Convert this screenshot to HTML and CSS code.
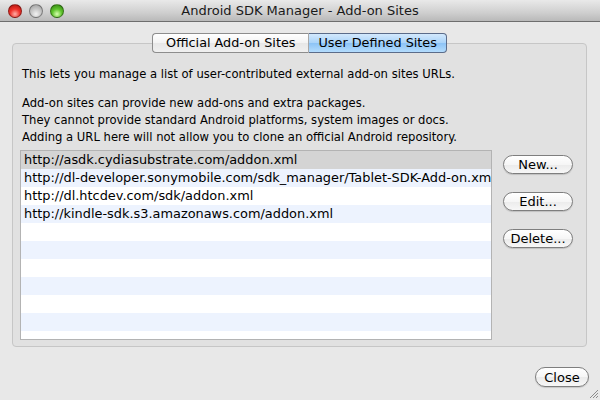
FILE: index.html
```html
<!DOCTYPE html>
<html lang="en">

<head>
    <meta charset="UTF-8">
    <title>Android SDK Manager - Add-on Sites</title>
    <link rel="stylesheet" href="styles.css">
</head>

<body>
    <div class="window">
        <div class="titlebar">
            <div class="lights">
                <span class="light red"></span>
                <span class="light gray"></span>
                <span class="light green"></span>
            </div>
            <div class="title">Android SDK Manager - Add-on Sites</div>
        </div>

        <div class="content">
            <div class="tabs">
                <span class="tab">Official Add-on Sites</span>
                <span class="tab active">User Defined Sites</span>
            </div>
            <div class="panel">
                <p class="info">This lets you manage a list of user-contributed external add-on sites URLs.</p>
                <p class="info">Add-on sites can provide new add-ons and extra packages.<br>
                    They cannot provide standard Android platforms, system images or docs.<br>
                    Adding a URL here will not allow you to clone an official Android repository.</p>

                <div class="sites">
                    <div class="list">
                        <div class="row selected">http://asdk.cydiasubstrate.com/addon.xml</div>
                        <div class="row">http://dl-developer.sonymobile.com/sdk_manager/Tablet-SDK-Add-on.xml</div>
                        <div class="row">http://dl.htcdev.com/sdk/addon.xml</div>
                        <div class="row">http://kindle-sdk.s3.amazonaws.com/addon.xml</div>
                    </div>
                    <div class="buttons">
                        <button class="btn">New...</button>
                        <button class="btn">Edit...</button>
                        <button class="btn">Delete...</button>
                    </div>
                </div>
            </div>
            <div class="footer">
                <button class="btn close">Close</button>
            </div>
        </div>

        <svg class="grip" width="10" height="10" viewBox="0 0 10 10">
            <path d="M9 1 L1 9 M9 4 L4 9 M9 7 L7 9" stroke="#8c8c8c" stroke-width="1" />
        </svg>
    </div>
</body>

</html>
```

FILE: styles.css
```css
* {
    margin: 0;
    padding: 0;
    box-sizing: border-box;
}

body {
    width: 600px;
    height: 400px;
    overflow: hidden;
    background-color: #e8e8e8;
    font-family: "DejaVu Sans", "Noto Sans", sans-serif;
    color: #000;
}

.window {
    position: relative;
    height: 400px;
}

.titlebar {
    position: relative;
    height: 22px;
    background: linear-gradient(#e9e9e9, #cfcfcf 60%, #b9b9b9);
    border-bottom: 1px solid #6e6e6e;
    display: flex;
    align-items: center;
    justify-content: center;
}

.lights {
    position: absolute;
    left: 8px;
    top: 4px;
    display: flex;
    gap: 7px;
}

.light {
    width: 14px;
    height: 14px;
    border-radius: 50%;
    border: 1px solid rgba(0, 0, 0, 0.35);
}

.light.red {
    background: radial-gradient(circle at 50% 75%, #ffb0a8 0, #f0332b 45%, #a8100a 100%);
}

.light.gray {
    background: radial-gradient(circle at 50% 75%, #f2f2f2 0, #c4c4c4 50%, #9a9a9a 100%);
}

.light.green {
    background: radial-gradient(circle at 50% 75%, #d8ffb0 0, #5fc42d 45%, #2d7d0c 100%);
}

.title {
    font-size: 13px;
    color: #1a1a1a;
}

.content {
    padding: 11px 13px 0 12px;
}

.tabs {
    position: relative;
    z-index: 1;
    display: flex;
    justify-content: center;
    margin-bottom: -10px;
}

.tab {
    height: 20px;
    line-height: 18px;
    font-size: 12.8px;
    padding: 0 13px;
    border: 1px solid #8d8d8d;
    background: linear-gradient(#ffffff, #f3f3f3 50%, #e7e7e7 51%, #f0f0f0);
}

.tab:first-child {
    border-radius: 4px 0 0 4px;
    border-right-color: #a8a8a8;
}

.tab.active {
    padding: 0 9px;
    border-radius: 0 4px 4px 0;
    border-color: #5b6c8a;
    border-left: none;
    background: linear-gradient(#d3e9fd, #a9d3f9 50%, #8cc3f6 51%, #b3dcfd);
}

.panel {
    height: 304px;
    background-color: #e1e1e1;
    border: 1px solid #c6c6c6;
    border-radius: 4px;
    padding: 22px 6px 6px 7px;
}

.info {
    font-size: 11.6px;
    line-height: 17px;
    padding-left: 2px;
    margin-bottom: 12px;
}

.info + .info {
    margin-bottom: 4px;
}

.sites {
    display: flex;
}

.list {
    width: 472px;
    height: 190px;
    border: 1px solid #b3b3b3;
    background: repeating-linear-gradient(#ffffff 0, #ffffff 18px, #edf3fe 18px, #edf3fe 36px);
    overflow: hidden;
}

.row {
    height: 18px;
    line-height: 18px;
    font-size: 12.9px;
    padding-left: 3px;
    white-space: nowrap;
}

.row:nth-child(even) {
    background-color: #edf3fe;
}

.row.selected {
    background-color: #d4d4d4;
}

.buttons {
    display: flex;
    flex-direction: column;
    gap: 18px;
    margin: 5px 0 0 11px;
}

.btn {
    width: 70px;
    height: 19px;
    font-family: "DejaVu Sans", "Noto Sans", sans-serif;
    font-size: 13px;
    color: #000;
    border: 1px solid #7e7e7e;
    border-radius: 10px;
    background: linear-gradient(#ffffff, #f6f6f6 50%, #ebebeb 51%, #f7f7f7);
    box-shadow: 0 1px 1px rgba(0, 0, 0, 0.15);
}

.footer {
    display: flex;
    justify-content: flex-end;
    padding-top: 20px;
    margin-right: -2px;
}

.btn.close {
    width: 54px;
    height: 20px;
}

.grip {
    position: absolute;
    right: 1px;
    bottom: 1px;
}
```
